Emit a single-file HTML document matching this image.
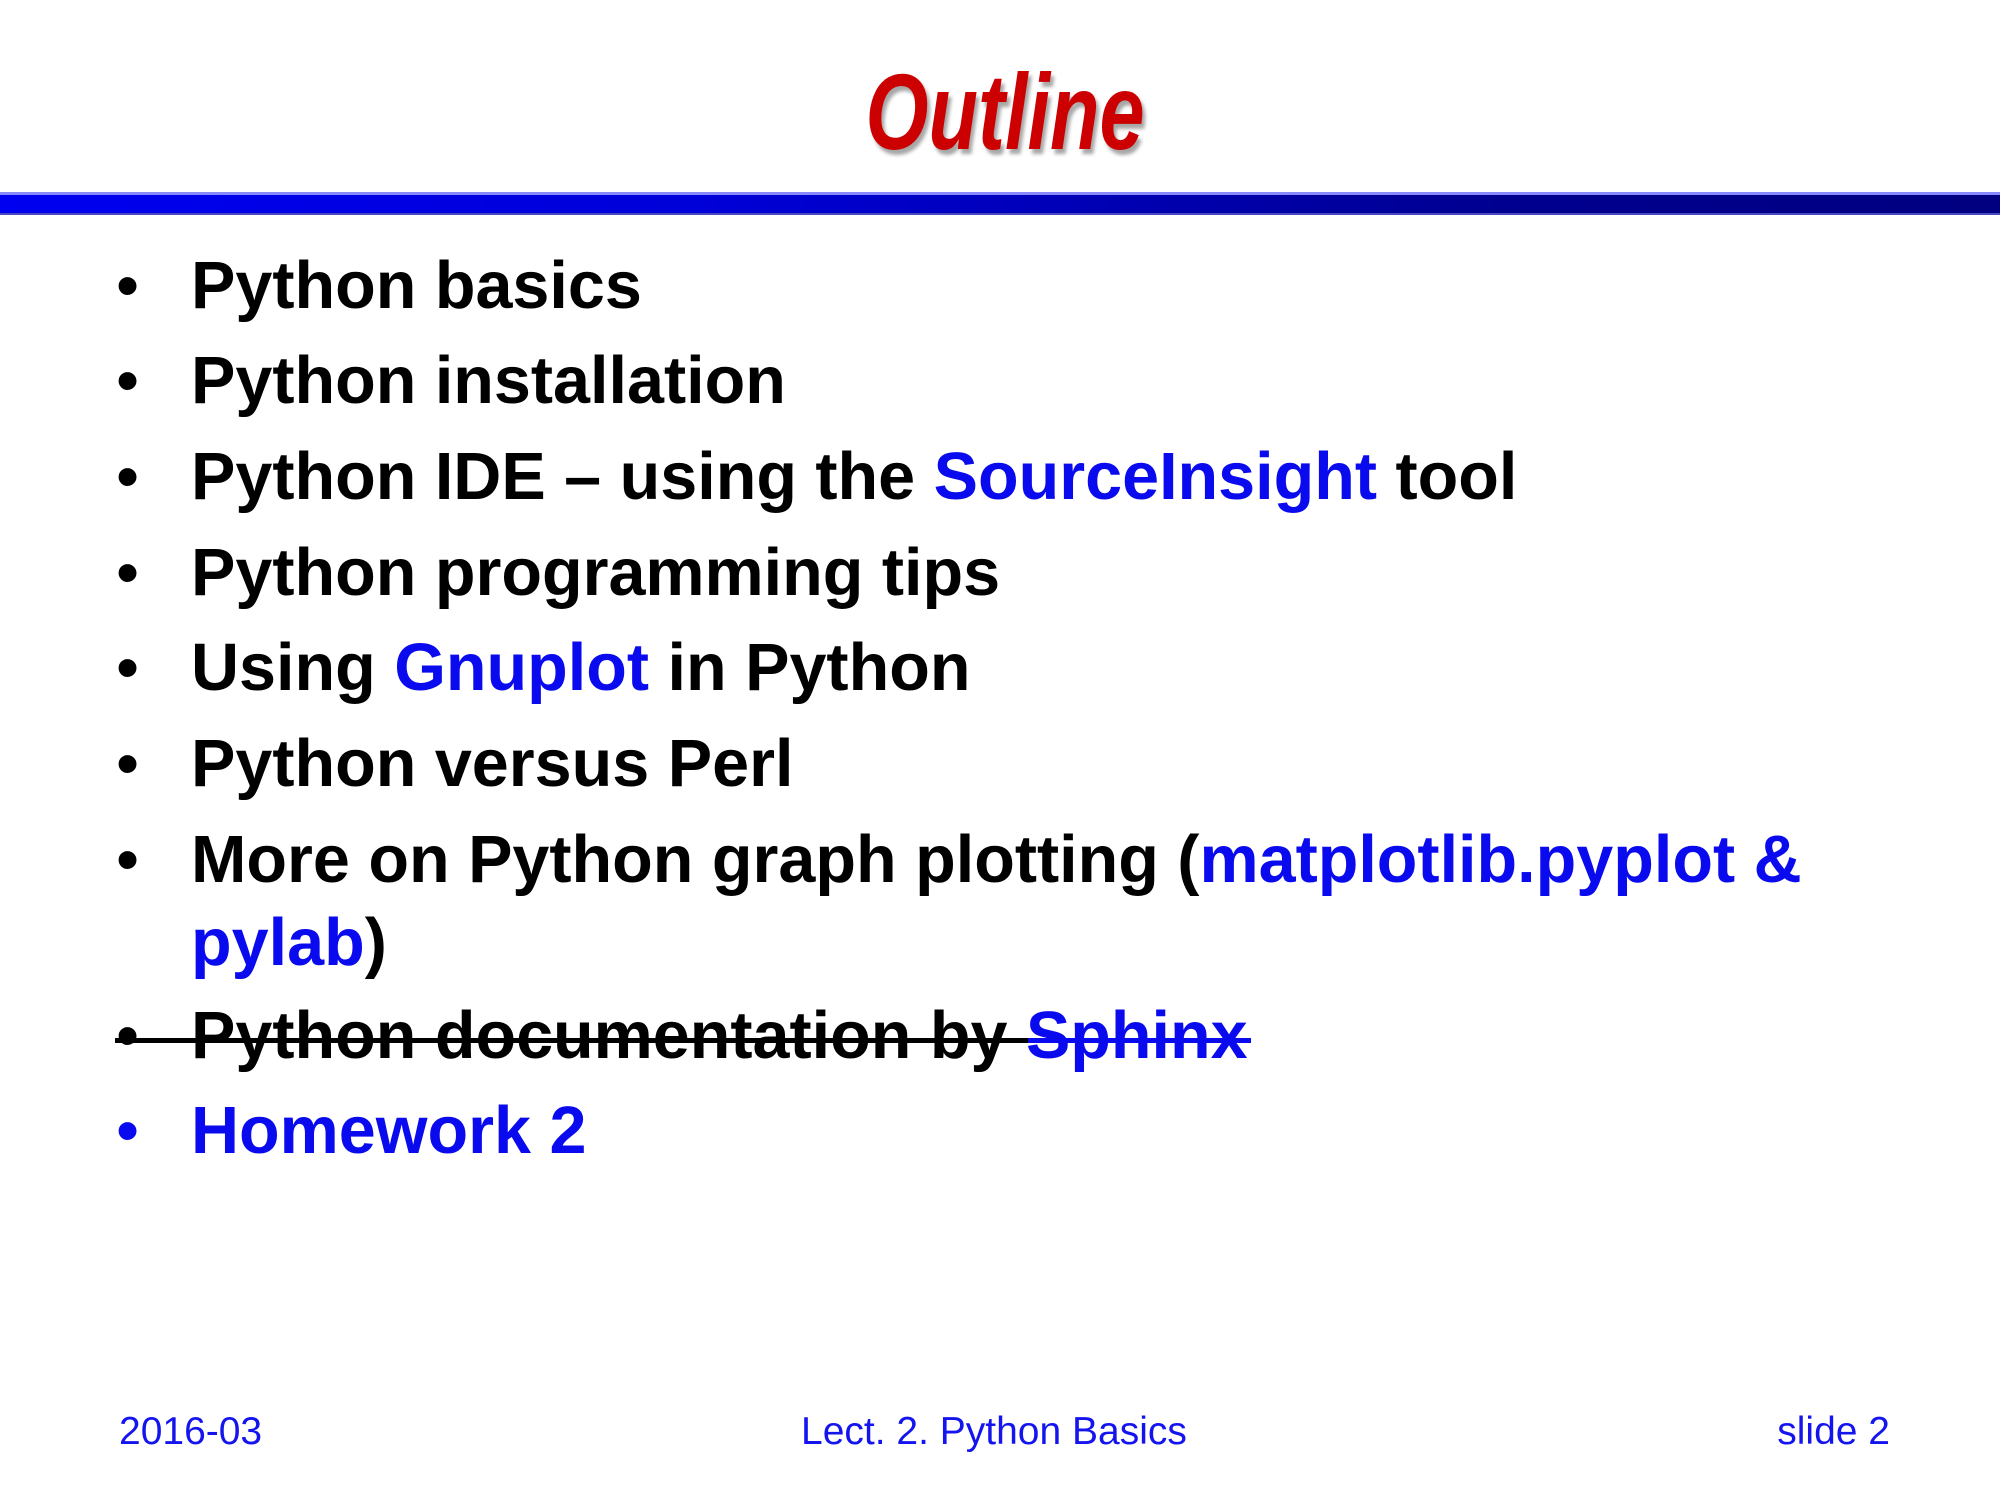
<!DOCTYPE html>
<html><head><meta charset="utf-8"><style>
html,body{margin:0;padding:0;background:#fff;}
body{width:2000px;height:1500px;position:relative;overflow:hidden;font-family:"Liberation Sans",Arial,sans-serif;}
.t{position:absolute;left:1005px;top:52px;font-size:108px;font-weight:bold;font-style:italic;color:#cc0000;transform:translateX(-50%) scaleX(0.75);white-space:nowrap;text-shadow:4px 5px 4px rgba(0,0,0,0.35);line-height:1.117;}
.bar{position:absolute;left:0;top:192px;width:2000px;height:23px;background:linear-gradient(to right,#0000f0 0%,#0000d8 35%,#000090 75%,#000080 100%);}
.bar:before{content:"";position:absolute;left:0;top:0;width:100%;height:3px;background:#8888ff;}
.bar:after{content:"";position:absolute;left:0;bottom:0;width:100%;height:2px;background:#4848c0;}
.l{position:absolute;left:191px;font-size:66.5px;font-weight:bold;color:#000;white-space:nowrap;line-height:1.117;}
.b{position:absolute;left:116px;font-size:66px;font-weight:normal;color:#000;line-height:1.117;}
.bl{color:#0a0aee;}
.f{position:absolute;font-size:39px;color:#1414ee;white-space:nowrap;line-height:1.117;}
.strike{position:absolute;left:115px;top:1038px;width:1136px;height:5px;background:#000;}
.strike2{position:absolute;left:1028px;top:1038px;width:223px;height:5px;background:#0a0aee;}
</style></head><body>
<div class="t">Outline</div>
<div class="bar"></div>

<div class="b" style="top:249px">•</div><div class="l" style="top:249px">Python basics</div>
<div class="b" style="top:344px">•</div><div class="l" style="top:344px">Python installation</div>
<div class="b" style="top:440px">•</div><div class="l" style="top:440px">Python IDE – using the <span class="bl">SourceInsight</span> tool</div>
<div class="b" style="top:536px">•</div><div class="l" style="top:536px">Python programming tips</div>
<div class="b" style="top:631px">•</div><div class="l" style="top:631px">Using <span class="bl">Gnuplot</span> in Python</div>
<div class="b" style="top:727px">•</div><div class="l" style="top:727px">Python versus Perl</div>
<div class="b" style="top:823px">•</div><div class="l" style="top:823px">More on Python graph plotting (<span class="bl">matplotlib.pyplot &amp;</span></div>
<div class="l" style="top:906px"><span class="bl">pylab</span>)</div>
<div class="b" style="top:999px">•</div><div class="l" style="top:999px">Python documentation by <span class="bl">Sphinx</span></div>
<div class="strike"></div><div class="strike2"></div>
<div class="b bl" style="top:1094px">•</div><div class="l bl" style="top:1094px">Homework 2</div>

<div class="f" style="left:119px;top:1410px">2016-03</div>
<div class="f" style="left:801px;top:1410px">Lect. 2. Python Basics</div>
<div class="f" style="right:110px;top:1410px">slide 2</div>
</body></html>
